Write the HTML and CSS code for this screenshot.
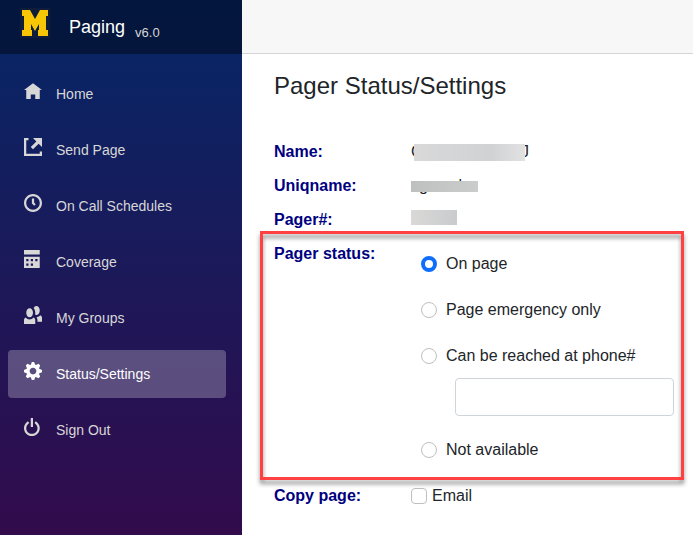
FILE: index.html
```
<!DOCTYPE html>
<html lang="en">

<head>
    <meta charset="UTF-8">
    <meta name="viewport" content="width=device-width, initial-scale=1.0">
    <link rel="stylesheet" href="styles.css">
    <title>Paging</title>
</head>

<body>
    <div class="page">
        <div class="sidebar">
            <div class="brand">
                <svg class="logo" viewBox="0 0 30 30" aria-hidden="true">
                    <rect width="30" height="30" fill="#0f1d3b" />
                    <path fill="#f9c606" d="M2 2h8l5 9 5-9h8v6h-2v14h2v6h-10v-6h1v-6l-4 7-4-7v6h1v6h-10v-6h2v-14h-2z" />
                </svg>
                <a class="brandName" href="#">Paging</a>
                <span class="version">v6.0</span>
            </div>
            <nav>
                <a class="navLink" href="#">
                    <svg class="icon" viewBox="0 0 8 8"><path transform="translate(0 .5)" d="M4 0l-4 3h1v4h2v-2h2v2h2v-4.03l1 .03-4-3z" /></svg>
                    Home
                </a>
                <a class="navLink" href="#">
                    <svg class="icon" viewBox="0 0 8 8"><path d="M0 0v8h8v-2h-1v1h-6v-6h1v-1h-2zm4 0l1.5 1.5-2.5 2.5 1 1 2.5-2.5 1.5 1.5v-4h-4z" /></svg>
                    Send Page
                </a>
                <a class="navLink" href="#">
                    <svg class="icon" viewBox="0 0 8 8"><path d="M4 0c-2.2 0-4 1.8-4 4s1.8 4 4 4 4-1.8 4-4-1.8-4-4-4zm0 1c1.66 0 3 1.34 3 3s-1.34 3-3 3-3-1.34-3-3 1.34-3 3-3zm-.5 1v2.22l.16.13.5.5.34.38.72-.72-.38-.34-.34-.34v-1.81h-1z" /></svg>
                    On Call Schedules
                </a>
                <a class="navLink" href="#">
                    <svg class="icon" viewBox="0 0 8 8"><path d="M0 0v2h7v-2h-7zm0 3v4.91c0 .05.04.09.09.09h6.81c.05 0 .09-.04.09-.09v-4.91h-7zm1 1h1v1h-1v-1zm2 0h1v1h-1v-1zm2 0h1v1h-1v-1zm-4 2h1v1h-1v-1zm2 0h1v1h-1v-1z" /></svg>
                    Coverage
                </a>
                <a class="navLink" href="#">
                    <svg class="icon" viewBox="0 0 8 8"><path d="M5.5 0c-.51 0-.95.35-1.22.88.45.54.72 1.28.72 2.13 0 .29-.03.55-.09.81.19.11.38.19.59.19.83 0 1.5-.9 1.5-2s-.67-2-1.5-2zm-3 1c-.83 0-1.5.9-1.5 2s.67 2 1.5 2 1.5-.9 1.5-2-.67-2-1.5-2zm4.75 3.16c-.43.51-1.02.82-1.69.84.27.38.44.84.44 1.34v.66h2v-1.66c0-.52-.31-.97-.75-1.19zm-6.5 1c-.44.22-.75.67-.75 1.19v1.66h5v-1.66c0-.52-.31-.97-.75-1.19-.45.53-1.06.84-1.75.84s-1.3-.32-1.75-.84z" /></svg>
                    My Groups
                </a>
                <a class="navLink active" href="#">
                    <svg class="icon" viewBox="0 0 8 8"><path d="M3.5 0l-.5 1.19c-.1.03-.19.08-.28.13l-1.19-.5-.72.72.5 1.19c-.05.1-.09.18-.13.28l-1.19.5v1l1.19.5c.04.1.08.18.13.28l-.5 1.19.72.72 1.19-.5c.09.04.18.09.28.13l.5 1.19h1l.5-1.19c.09-.04.19-.08.28-.13l1.19.5.72-.72-.5-1.19c.04-.09.09-.19.13-.28l1.19-.5v-1l-1.19-.5c-.03-.09-.08-.19-.13-.28l.5-1.19-.72-.72-1.19.5c-.09-.04-.19-.09-.28-.13l-.5-1.19h-1zm.5 2.5c.83 0 1.5.67 1.5 1.5s-.67 1.5-1.5 1.5-1.5-.67-1.5-1.5.67-1.5 1.5-1.5z" /></svg>
                    Status/Settings
                </a>
                <a class="navLink" href="#">
                    <svg class="icon" viewBox="0 0 8 8"><path d="M3 0v4h1v-4h-1zm-1.28 1.44l-.38.31c-.81.64-1.34 1.64-1.34 2.75 0 1.93 1.57 3.5 3.5 3.5s3.5-1.57 3.5-3.5c0-1.11-.53-2.11-1.34-2.75l-.38-.31-.63.78.38.31c.58.46.97 1.17.97 1.97 0 1.39-1.11 2.5-2.5 2.5s-2.5-1.11-2.5-2.5c0-.8.36-1.51.94-1.97l.41-.31-.63-.78z" /></svg>
                    Sign Out
                </a>
            </nav>
        </div>
        <main>
            <div class="topRow"></div>
            <form class="content">
                <h1>Pager Status/Settings</h1>
                <div class="row">
                    <b class="rowLabel">Name:</b>
                    <span class="redacted redactedName"><span>C</span><span>J</span></span>
                </div>
                <div class="row">
                    <b class="rowLabel">Uniqname:</b>
                    <span class="redacted redactedUser"><span>g</span><span>l</span></span>
                </div>
                <div class="row">
                    <b class="rowLabel">Pager#:</b>
                    <span class="redacted redactedPager"></span>
                </div>
                <div class="row statusRow" role="radiogroup" aria-labelledby="statusLabel">
                    <b class="rowLabel" id="statusLabel">Pager status:</b>
                    <div class="options">
                        <div class="option">
                            <input type="radio" name="status" id="onPage" checked>
                            <label for="onPage">On page</label>
                        </div>
                        <div class="option">
                            <input type="radio" name="status" id="emergency">
                            <label for="emergency">Page emergency only</label>
                        </div>
                        <div>
                            <div class="option">
                                <input type="radio" name="status" id="reached">
                                <label for="reached" id="reachedLabel">Can be reached at phone#</label>
                            </div>
                            <input type="tel" class="phone" name="phone" aria-labelledby="reachedLabel">
                        </div>
                        <div class="option">
                            <input type="radio" name="status" id="notAvailable">
                            <label for="notAvailable">Not available</label>
                        </div>
                    </div>
                </div>
                <div class="row">
                    <b class="rowLabel">Copy page:</b>
                    <div class="check">
                        <input type="checkbox" name="email" id="email">
                        <label for="email">Email</label>
                    </div>
                </div>
            </form>
        </main>
    </div>
</body>

</html>
```
FILE: styles.css
```
* {
    box-sizing: border-box;
}

body {
    margin: 0;
    font-family: "Liberation Sans", Arial, sans-serif;
    font-size: 16px;
    line-height: 24px;
    color: #212529;
    background: #fff;
}

.page {
    display: flex;
    min-height: 100vh;
}

/* Sidebar */
.sidebar {
    flex: none;
    width: 242px;
    background: linear-gradient(180deg, rgb(5, 39, 103) 0%, #3a0647 118%);
}

.brand {
    display: flex;
    align-items: center;
    height: 54px;
    padding: 0 20px;
    background: rgba(0, 0, 0, 0.4);
}

.logo {
    width: 30px;
    height: 30px;
    margin-bottom: 8px;
}

.brandName {
    margin: 0 10px 0 19px;
    font-size: 18px;
    color: #fff;
    text-decoration: none;
}

.version {
    margin-top: 12px;
    font-size: 13px;
    color: #d7d7d7;
}

nav {
    display: flex;
    flex-direction: column;
    gap: 8px;
    padding: 16px 16px 16px 8px;
}

.navLink {
    display: flex;
    align-items: center;
    gap: 14px;
    height: 48px;
    padding: 0 16px;
    border-radius: 4px;
    font-size: 14px;
    color: #d7d7d7;
    text-decoration: none;
}

.navLink.active {
    background: rgba(255, 255, 255, 0.25);
    color: #fff;
}

.icon {
    width: 18px;
    height: 18px;
    margin-bottom: 6px;
    fill: currentColor;
}

/* Main */
main {
    flex: 1;
    min-width: 0;
}

.topRow {
    height: 54px;
    background: #f7f7f7;
    border-bottom: 1px solid #d6d5d5;
}

.content {
    padding: 18px 19px 18px 32px;
}

h1 {
    margin: 0 0 39px;
    font-size: 24px;
    font-weight: normal;
    line-height: 28px;
}

.row {
    display: flex;
    margin-bottom: 10px;
}

.row:nth-of-type(1) {
    margin-top: 40px;
}

.rowLabel {
    flex: none;
    width: 137px;
    color: #000080;
}

/* Grey bars over private values */
.redacted {
    position: relative;
    display: flex;
    justify-content: space-between;
    height: 24px;
}

.redacted::after {
    content: "";
    position: absolute;
}

.redactedName {
    width: 118px;
}

.redactedName::after {
    inset: 4px 4px 3px 3px;
    background: linear-gradient(90deg, #d9d9da, #d1d2d4 70%, #e2e2e3);
}

.redactedUser {
    width: 67px;
    padding: 0 16px 0 8px;
}

.redactedUser::after {
    inset: 7px 0 6px;
    background: linear-gradient(90deg, #bebfbf, #cbcccc);
}

.redactedPager {
    width: 46px;
}

.redactedPager::after {
    inset: 2px 0 7px;
    background: linear-gradient(90deg, #dad9d7, #c9cbce);
}

/* Pager status, outlined in red */
.statusRow {
    position: relative;
    padding-bottom: 8px;
    margin-bottom: 14px;
}

.statusRow::after {
    content: "";
    position: absolute;
    inset: -11px -10px -10px -14px;
    border: 3px solid #ff4141;
    filter: drop-shadow(0 4px 2px rgba(0, 0, 0, 0.45));
    pointer-events: none;
}

.options {
    flex: 1;
    min-width: 0;
    display: flex;
    flex-direction: column;
    gap: 22px;
    padding: 10px 0 0 10px;
}

.option {
    display: flex;
    align-items: center;
    gap: 9px;
}

.check {
    display: flex;
    align-items: center;
    gap: 5px;
}

input[type="radio"],
input[type="checkbox"] {
    appearance: none;
    flex: none;
    width: 16px;
    height: 16px;
    margin: 0;
    border: 1px solid #bfbfbf;
    background: #fff;
}

input[type="radio"] {
    border-radius: 50%;
}

input[type="checkbox"] {
    border-radius: 4px;
}

input[type="radio"]:checked {
    border: 4px solid #0d6efd;
}

.phone {
    display: block;
    width: calc(100% - 34px);
    height: 38px;
    margin: 10px 0 0 34px;
    padding: 6px 12px;
    border: 1px solid #ced4da;
    border-radius: 4px;
    font: inherit;
    color: inherit;
}
```
